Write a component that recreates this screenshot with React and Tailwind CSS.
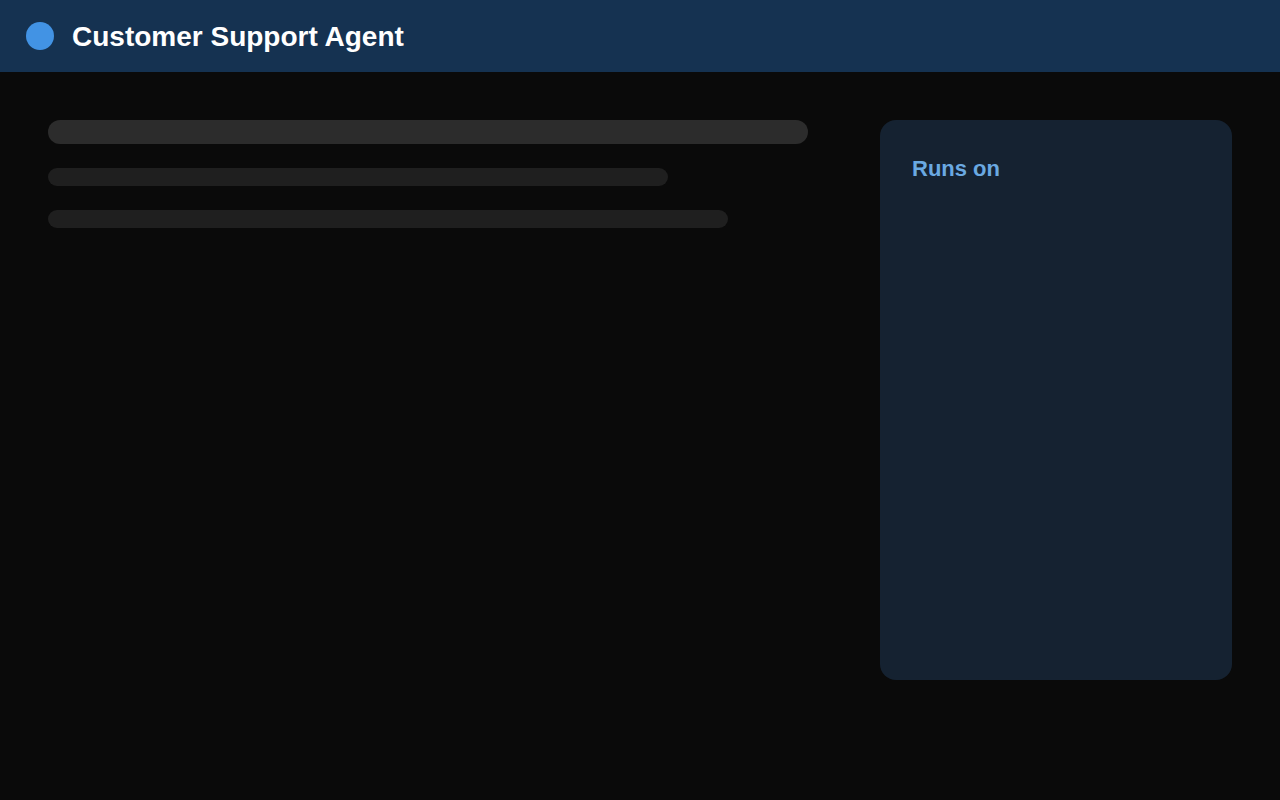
export default function App() {
  return (
    <div className="min-h-[800px] bg-[#0a0a0a]" style={{ fontFamily: '"Liberation Sans", Arial, sans-serif' }}>
      <header className="h-[72px] bg-[#153251] flex items-center px-[26px] gap-[18px]">
        <div className="w-[28px] h-[28px] rounded-full bg-[#4293e4]" />
        <h1 className="text-[28px] font-bold text-white leading-none mt-[2px]">Customer Support Agent</h1>
      </header>
      <main className="flex gap-[72px] p-[48px]">
        <div className="w-[760px] flex flex-col">
          <div className="h-[24px] w-[760px] rounded-full bg-[#2c2c2c]" />
          <div className="h-[18px] w-[620px] rounded-full bg-[#1f1f1f] mt-[24px]" />
          <div className="h-[18px] w-[680px] rounded-full bg-[#1f1f1f] mt-[24px]" />
        </div>
        <aside className="w-[352px] h-[560px] rounded-[16px] bg-[#152231] p-[32px]">
          <h2 className="text-[22px] font-bold text-[#6aa9e2] leading-[34px]">Runs on</h2>
        </aside>
      </main>
    </div>
  );
}
